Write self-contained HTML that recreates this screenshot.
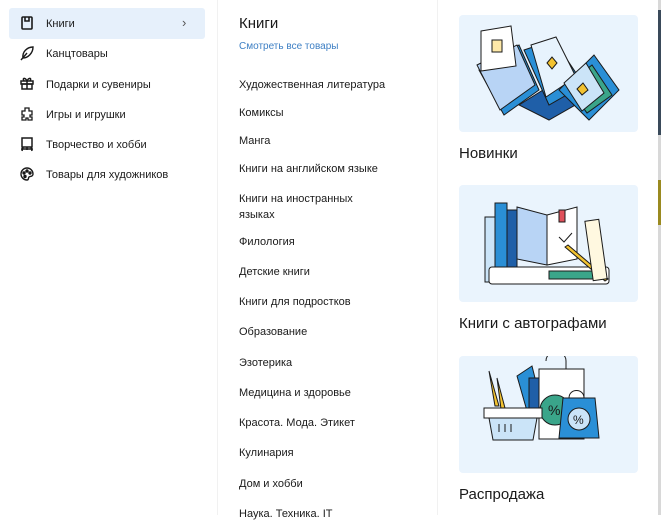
<!DOCTYPE html>
<html><head><meta charset="utf-8"><style>
*{margin:0;padding:0;box-sizing:border-box}
body{width:661px;height:515px;overflow:hidden;background:#fff;font-family:"Liberation Sans",Arial,sans-serif;color:#1a1a1a;position:relative}
.a{position:absolute;white-space:nowrap}
.l{font-size:11px;left:46px}
.m{font-size:11px;left:239px}
.ic{position:absolute;left:19px;width:16px;height:16px}
.card{position:absolute;left:459px;width:179px;height:117px;background:#eaf4fd;border-radius:4px}
.t{font-size:15px;left:459px}
</style></head><body>
<div class="a" style="left:217px;top:0;width:1px;height:515px;background:#f1f1f1"></div>
<div class="a" style="left:437px;top:0;width:1px;height:515px;background:#f1f1f1"></div>
<div class="a" style="left:658px;top:0;width:3px;height:515px;background:#d8d8d8"></div>
<div class="a" style="left:658px;top:10px;width:3px;height:125px;background:#3a4a5a"></div>
<div class="a" style="left:658px;top:180px;width:3px;height:45px;background:#9a8a20"></div>

<div class="a" style="left:9px;top:8px;width:196px;height:31px;background:#e6f0fb;border-radius:3px"></div>
<svg class="ic" style="top:15px" viewBox="0 0 16 16" fill="none" stroke="#1a1a1a" stroke-width="1.6"><rect x="3" y="2" width="10" height="12" rx="1"/><path d="M6 2v4h4V2"/></svg>
<div class="a l" style="top:18px">Книги</div>
<div class="a" style="left:182px;top:15px;font-size:13px;color:#555">›</div>
<svg class="ic" style="top:45px" viewBox="0 0 16 16" fill="none" stroke="#1a1a1a" stroke-width="1.4"><path d="M2 15L8 8M4 13c-1-6 4-11 10-11 0 6-5 11-10 11z"/></svg>
<div class="a l" style="top:48px">Канцтовары</div>
<svg class="ic" style="top:75px" viewBox="0 0 16 16" fill="none" stroke="#1a1a1a" stroke-width="1.5"><rect x="2" y="6" width="12" height="3"/><rect x="3" y="9" width="10" height="5"/><path d="M8 6v8M5 6c-2-3 1-4 3 0 2-4 5-3 3 0"/></svg>
<div class="a l" style="top:79px">Подарки и сувениры</div>
<svg class="ic" style="top:106px" viewBox="0 0 16 16" fill="none" stroke="#1a1a1a" stroke-width="1.3"><path d="M6 2h4v3h3v4h-2v2h2v3H9v-2H7v2H3v-3h2V9H3V5h3z"/></svg>
<div class="a l" style="top:109px">Игры и игрушки</div>
<svg class="ic" style="top:136px" viewBox="0 0 16 16" fill="none" stroke="#1a1a1a" stroke-width="1.5"><rect x="3" y="2" width="10" height="9"/><path d="M4 11l-1 4M12 11l1 4M8 11v3M2 13h12"/></svg>
<div class="a l" style="top:139px">Творчество и хобби</div>
<svg class="ic" style="top:166px" viewBox="0 0 16 16" fill="none" stroke="#1a1a1a" stroke-width="1.4"><path d="M8 2a6 6 0 1 0 0 12c2 0 1-2 2-3s4 0 4-3a6 6 0 0 0-6-6z"/><circle cx="5" cy="7" r="1" fill="#1a1a1a"/><circle cx="8" cy="5" r="1" fill="#1a1a1a"/><circle cx="11" cy="7" r="1" fill="#1a1a1a"/><circle cx="6" cy="10.5" r="1" fill="#1a1a1a"/></svg>
<div class="a l" style="top:169px">Товары для художников</div>

<div class="a" style="left:239px;top:15px;font-size:15px;font-weight:500">Книги</div>
<div class="a" style="left:239px;top:41px;font-size:10px;color:#3d7fc4">Смотреть все товары</div>
<div class="a m" style="top:79px">Художественная литература</div>
<div class="a m" style="top:107px">Комиксы</div>
<div class="a m" style="top:135px">Манга</div>
<div class="a m" style="top:163px">Книги на английском языке</div>
<div class="a m" style="top:191px;line-height:16px">Книги на иностранных<br>языках</div>
<div class="a m" style="top:236px">Филология</div>
<div class="a m" style="top:266px">Детские книги</div>
<div class="a m" style="top:296px">Книги для подростков</div>
<div class="a m" style="top:326px">Образование</div>
<div class="a m" style="top:357px">Эзотерика</div>
<div class="a m" style="top:387px">Медицина и здоровье</div>
<div class="a m" style="top:417px">Красота. Мода. Этикет</div>
<div class="a m" style="top:447px">Кулинария</div>
<div class="a m" style="top:478px">Дом и хобби</div>
<div class="a m" style="top:508px">Наука. Техника. IT</div>

<div class="card" style="top:15px"><svg width="179" height="117" viewBox="0 0 179 117" stroke="#1a1a1a" stroke-width="1">
<path d="M20 55l40-25 20 45-35 25z" fill="#2a8fd6"/><path d="M18 50l40-20 18 40-35 25z" fill="#b8d4f5"/><path d="M22 16l30-5 5 40-35 5z" fill="#fff"/><rect x="33" y="25" width="10" height="12" fill="#ffe9a8"/>
<path d="M60 90l40-25 25 20-35 20z" fill="#1f5fa8"/><path d="M65 35l30-10 30 45-35 20z" fill="#2a8fd6"/><path d="M72 30l25-8 20 40-30 20z" fill="#e7f3fd"/><path d="M88 48l5-6 5 6-5 6z" fill="#f2c230"/>
<path d="M100 75l35-35 25 35-30 30z" fill="#2a8fd6"/><path d="M108 70l25-20 20 30-25 18z" fill="#3aa58a"/><path d="M105 68l22-20 18 30-22 18z" fill="#cbe4f8"/><path d="M118 74l6-6 5 7-6 5z" fill="#f2c230"/>
</svg></div>
<div class="a t" style="top:145px">Новинки</div>

<div class="card" style="top:185px"><svg width="179" height="117" viewBox="0 0 179 117" stroke="#1a1a1a" stroke-width="1">
<rect x="26" y="32" width="10" height="65" fill="#cbe4f8"/><rect x="36" y="18" width="12" height="79" fill="#2a8fd6"/><rect x="48" y="25" width="10" height="72" fill="#1f5fa8"/>
<rect x="30" y="82" width="120" height="17" rx="3" fill="#fff"/><rect x="90" y="86" width="50" height="8" fill="#3aa58a"/>
<path d="M58 22l30 8v50l-30-6z" fill="#b8d4f5"/><path d="M88 30l30-8v52l-30 6z" fill="#fff"/><rect x="100" y="25" width="6" height="12" fill="#e0505a"/><path d="M100 52l5 5 8-9" fill="none"/>
<path d="M106 62l40 34 3-2-40-34z" fill="#f2c230"/><rect x="130" y="35" width="14" height="60" fill="#fff8e0" transform="rotate(-8 137 65)"/>
</svg></div>
<div class="a t" style="top:315px">Книги с автографами</div>

<div class="card" style="top:356px"><svg width="179" height="117" viewBox="0 0 179 117" stroke="#1a1a1a" stroke-width="1">
<path d="M30 15l10 35h-4z" fill="#f2c230"/><path d="M38 22l8 30-4 1z" fill="#f2c230"/>
<path d="M58 20l15-10 10 40-15 5z" fill="#2a8fd6"/><rect x="70" y="22" width="12" height="32" fill="#1f5fa8"/>
<path d="M87 5c0-12 20-12 20 0v8" fill="none"/><rect x="80" y="13" width="45" height="70" fill="#fff"/>
<circle cx="96" cy="54" r="15" fill="#3aa58a"/><text x="89" y="59" font-size="14" fill="#1a1a1a" stroke="none">%</text>
<path d="M110 42c0-10 15-10 15 0" fill="none"/><path d="M104 42h32l4 40h-40z" fill="#2a8fd6"/><circle cx="120" cy="63" r="11" fill="#cbe4f8"/><text x="114" y="68" font-size="12" stroke="none" fill="#1a1a1a">%</text>
<rect x="25" y="52" width="58" height="10" fill="#fff"/><path d="M30 62h48l-4 22h-40z" fill="#cbe4f8"/><path d="M40 68v8M46 68v8M52 68v8"/>
</svg></div>
<div class="a t" style="top:486px">Распродажа</div>
</body></html>
